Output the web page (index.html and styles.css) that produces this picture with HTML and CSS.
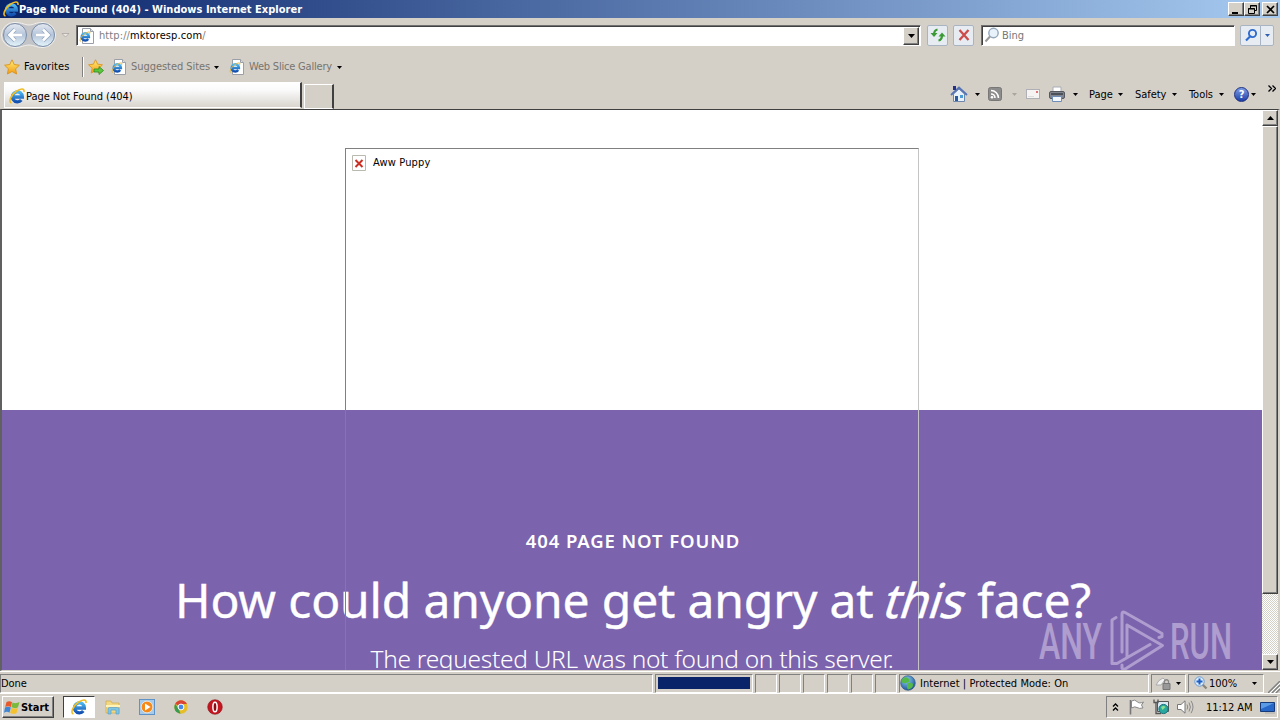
FILE: index.html
```
<!DOCTYPE html>
<html lang="en">
<head>
  <meta charset="UTF-8">
  <title>Page Not Found (404) - Windows Internet Explorer</title>
  <link rel="stylesheet" href="styles.css">
</head>
<body>
  <!-- shared icons -->
  <svg class="defs" width="0" height="0">
    <defs>
      <linearGradient id="blue" x1="0" y1="0" x2="0" y2="1">
        <stop offset="0" stop-color="#4db8f0"/><stop offset="1" stop-color="#1450b0"/>
      </linearGradient>
      <linearGradient id="round" x1="0" y1="0" x2="0" y2="1">
        <stop offset="0" stop-color="#e4e9f1"/><stop offset=".5" stop-color="#b5c5da"/><stop offset="1" stop-color="#e6f6fc"/>
      </linearGradient>
      <linearGradient id="gold" x1="0" y1="0" x2="0" y2="1">
        <stop offset="0" stop-color="#fff07a"/><stop offset="1" stop-color="#f39a14"/>
      </linearGradient>
      <radialGradient id="globe" cx=".4" cy=".3" r=".8">
        <stop offset="0" stop-color="#8fd0f5"/><stop offset="1" stop-color="#10458e"/>
      </radialGradient>
      <symbol id="ie" viewBox="0 0 16 16">
        <path d="M4 9H13.4A5 5 0 1 0 12.3 12" fill="none" stroke="url(#blue)" stroke-width="3.300"/>
        <path d="M2.500 15C-1 14 2 7 7 3.500S15.500 0 15 4" fill="none" stroke="#f0bc25" stroke-width="1.600"/>
      </symbol>
      <symbol id="iepage" viewBox="0 0 16 16">
        <path d="M3.500.5H11.500L14.500 3.500V15.500H3.500Z" fill="#fff" stroke="#9ba0a8"/>
        <path d="M11.500.5V3.500H14.500" fill="#ddd" stroke="#9ba0a8"/>
        <path d="M3 9H9.900A3.600 3.600 0 1 0 9.200 11" fill="none" stroke="url(#blue)" stroke-width="2.500"/>
        <path d="M1.500 13.500C0 12 3 7 7 5S11.500 4 10.500 6" fill="none" stroke="#e4b53c"/>
      </symbol>
      <symbol id="star" viewBox="0 0 16 16">
        <path d="M8 .8L10.200 5.500 15.400 6.200 11.600 9.800 12.600 15 8 12.500 3.400 15 4.400 9.800.6 6.200 5.800 5.500Z" fill="url(#gold)" stroke="#d9921a" stroke-width=".9"/>
      </symbol>
      <symbol id="down" viewBox="0 0 5 3"><path d="M0 0H5L2.500 3Z" fill="currentColor"/></symbol>
    </defs>
  </svg>

  <div class="titlebar">
    <svg class="i16"><use href="#ie"/></svg>
    <span class="title">Page Not Found (404) - Windows Internet Explorer</span>
    <div class="winbtns">
      <span class="winbtn"><svg width="11" height="9"><path d="M1 7H7V9H1Z"/></svg></span>
      <span class="winbtn"><svg width="11" height="9" fill="none" stroke="#000"><path d="M3.500 3V.500H9.500V5.500H8M3 1H10M1.500 3.500H7.500V8.500H1.500ZM1 4H8"/></svg></span>
      <span class="winbtn close"><svg width="11" height="9"><path d="M2 1L9 8M9 1L2 8" stroke="#000" stroke-width="1.700"/></svg></span>
    </div>
  </div>

  <div class="navbar">
    <svg class="backfwd" width="72" height="28" viewBox="0 0 72 28">
      <path d="M14 1.500C23 1.500 24 4 29 4S35 1.500 43 1.500A12.500 12.500 0 0 1 43 26.500C36 26.500 34 24 29 24S22 26.500 14 26.500A12.500 12.500 0 0 1 14 1.500Z" fill="#c3c4c8" stroke="#f2f1ee"/>
      <circle cx="15" cy="14" r="11.500" fill="url(#round)" stroke="#7b8ca6"/>
      <circle cx="43" cy="14" r="11.500" fill="url(#round)" stroke="#7b8ca6"/>
      <path d="M22 14H10M15 8.500L9.500 14L15 19.500M36 14H48M43 8.500L48.500 14L43 19.500" fill="none" stroke="#8fa3c0" stroke-width="4.200"/>
      <path d="M22 14H10M15 8.500L9.500 14L15 19.500M36 14H48M43 8.500L48.500 14L43 19.500" fill="none" stroke="#fff" stroke-width="2.800"/>
      <path d="M62 12.500H69L65.500 16Z" fill="#e9e6e0" stroke="#aaa69e" stroke-width=".8"/>
    </svg>
    <div class="address">
      <svg class="i16"><use href="#iepage"/></svg>
      <span class="url">http://<b>mktoresp.com</b>/</span>
      <span class="combo"><svg width="7" height="4"><path d="M0 0H7L3.500 4Z"/></svg></span>
    </div>
    <span class="toolbtn refresh"><svg width="16" height="16"><path d="M7.500 2.500Q4 3 4 8M8.500 13.500Q12 13 12 8" fill="none" stroke="#3b9a35" stroke-width="2.200"/><path d="M.5 6H7.500L4 10ZM8.500 9.500L12 5.500 15.500 9.500Z" fill="#3b9a35"/></svg></span>
    <span class="toolbtn stop"><svg width="14" height="14"><path d="M2.500 2L11.500 12M11.500 2L2.500 12" stroke="#cc4b4b" stroke-width="2.300"/></svg></span>
    <div class="search">
      <svg width="16" height="16" fill="none"><circle cx="9.500" cy="6" r="4.700" fill="#e8f2fa" stroke="#94a7bb" stroke-width="1.400"/><path d="M6 9.500L1.500 14.500" stroke="#999" stroke-width="2"/></svg>
      <span>Bing</span>
    </div>
    <span class="toolbtn go"><svg width="14" height="14" fill="none"><circle cx="8.500" cy="5.500" r="3.600" stroke="#2e6bd0" stroke-width="1.900"/><path d="M6 8.500L2 12.500" stroke="#2e6bd0" stroke-width="2.200"/></svg></span>
    <span class="toolbtn godrop"><svg class="arr"><use href="#down"/></svg></span>
  </div>

  <div class="favbar">
    <svg class="i16"><use href="#star"/></svg>
    <span class="fav">Favorites</span>
    <i class="sep"></i>
    <svg class="i16 addfav" viewBox="0 0 16 16"><use href="#star" width="15" height="15"/><path d="M6 10H11V7.500L15.500 11.500 11 15.500V13H6Z" fill="#5cc63c" stroke="#2d8a22" stroke-width=".8"/></svg>
    <svg class="i16 page1"><use href="#iepage"/></svg>
    <span class="grey sugg">Suggested Sites</span>
    <svg class="arr"><use href="#down"/></svg>
    <svg class="i16 page2"><use href="#iepage"/></svg>
    <span class="grey slice">Web Slice Gallery</span>
    <svg class="arr"><use href="#down"/></svg>
  </div>

  <div class="tabbar">
    <div class="tab"><svg class="i16"><use href="#ie"/></svg><span>Page Not Found (404)</span></div>
    <div class="newtab"></div>
    <div class="commands">
      <svg class="home" width="18" height="18"><path d="M3.500 9V16.500H14.500V9L9 4Z" fill="#e9f2fb" stroke="#6f87aa"/><path d="M1 10L9 2.500 17 10" fill="none" stroke="#5573b5" stroke-width="1.800"/><path d="M3 1H6V5H3Z" fill="#26308a"/><path d="M5 11H8V16H5Z" fill="#2c5aa0"/><path d="M10 10H13V13H10Z" fill="#4c9bd5"/></svg>
      <svg class="arr a1"><use href="#down"/></svg>
      <svg class="rss" width="14" height="14"><rect x=".5" y=".5" width="13" height="13" rx="2" fill="#8c8c8c" stroke="#777"/><path d="M3 3.500A7.500 7.500 0 0 1 10.500 11M3 7A4 4 0 0 1 7 11" fill="none" stroke="#fff" stroke-width="1.600"/><circle cx="4" cy="10.300" r="1.300" fill="#fff"/></svg>
      <svg class="arr off a2"><use href="#down"/></svg>
      <svg class="mail" width="14" height="10"><rect x=".5" y=".5" width="13" height="9" fill="#f6f4f3" stroke="#aeb0b5"/><path d="M10 2H12V4H10Z" fill="#d77"/><path d="M2 7.500H8" stroke="#ddd"/></svg>
      <svg class="print" width="16" height="16"><path d="M4 1H12V7H4Z" fill="#fff" stroke="#a9adb5"/><rect x=".5" y="5.500" width="15" height="7" rx="1.500" fill="#80858e" stroke="#545961"/><path d="M2 8H14" stroke="#3c4148" stroke-width="1.500"/><path d="M3.500 10.500H12.500V15.500H3.500Z" fill="#f3f8ff" stroke="#6c8eb8"/></svg>
      <svg class="arr a3"><use href="#down"/></svg>
      <span class="cmd c1">Page</span><svg class="arr"><use href="#down"/></svg>
      <span class="cmd c2">Safety</span><svg class="arr"><use href="#down"/></svg>
      <span class="cmd c3">Tools</span><svg class="arr"><use href="#down"/></svg>
      <span class="help">?</span><svg class="arr a4"><use href="#down"/></svg>
      <svg class="more" width="8" height="7"><path d="M.500.500L3.500 3.500.500 6.500M4.500.500L7.500 3.500 4.500 6.500" fill="none" stroke="#000" stroke-width="1.300"/></svg>
    </div>
  </div>

  <div class="viewport">
    <div class="page">
      <div class="photo">
        <svg width="14" height="16"><path d="M.5.5H13.500V15.500H.5Z" fill="#fff" stroke="#b9b9b0"/><path d="M3.500 5L10.500 12M10.500 5L3.500 12" stroke="#c92f22" stroke-width="2"/></svg>
        <span>Aww Puppy</span>
      </div>
      <div class="hero">
        <h2>404 PAGE NOT FOUND</h2>
        <h1>How could anyone get angry at <em>this</em> face?</h1>
        <p>The requested URL was not found on this server.</p>
      </div>
      <svg class="watermark" width="194" height="62" viewBox="0 0 194 62">
        <text x="0" y="49" textLength="63" lengthAdjust="spacingAndGlyphs">ANY</text>
        <text x="131" y="49" textLength="62" lengthAdjust="spacingAndGlyphs">RUN</text>
        <path d="M77 7.500L73 10V53.500H78L111 34.500M83 42V4Q83 1 86 2.500L123 23.500V26.500L120 27.500M83 55V58Q84 60 87 58.500L123.500 35.500L88 15M88 15V47" fill="none" stroke-width="3" stroke-linejoin="round" stroke-linecap="round"/>
      </svg>
    </div>
    <div class="scrollbar">
      <span class="sbtn"><svg width="7" height="4"><path d="M3.500 0L7 4H0Z"/></svg></span>
      <span class="thumb"></span>
      <span class="sbtn end"><svg width="7" height="4"><path d="M0 0H7L3.500 4Z"/></svg></span>
    </div>
  </div>

  <div class="statusbar">
    <div class="pane done"><span>Done</span></div>
    <div class="pane progress"><i></i></div>
    <div class="pane small"></div>
    <div class="pane small"></div>
    <div class="pane small"></div>
    <div class="pane small"></div>
    <div class="pane small"></div>
    <div class="pane small"></div>
    <div class="pane zone">
      <svg width="16" height="16"><circle cx="8" cy="8" r="7.300" fill="url(#globe)" stroke="#345c86" stroke-width=".7"/><path d="M3 3Q7 1 9 4T6 8Q2 9 1.500 6ZM8 8Q13 7 13 10T8 14.500Q6 12 8 8Z" fill="#54b948"/></svg>
      <span>Internet | Protected Mode: On</span>
    </div>
    <div class="pane lock">
      <svg width="17" height="16"><path d="M1 10Q3 5 8 3L10 5 6 10Z" fill="#f3f3f3" stroke="#aaa"/><path d="M8 8.500H15V14.500H8Z" fill="#999" stroke="#777"/><path d="M9.500 8V6Q11.500 3.500 13.500 6V8" fill="none" stroke="#888" stroke-width="1.300"/></svg>
      <svg class="arr"><use href="#down"/></svg>
    </div>
    <div class="pane zoom">
      <svg width="14" height="14"><path d="M8.500 8.500L12.500 12.500" stroke="#8b8579" stroke-width="2.300"/><circle cx="5.500" cy="5.500" r="4.700" fill="#dcebfa" stroke="#6c9bd2"/><path d="M5.500 2.500V8.500M2.500 5.500H8.500" stroke="#1d5fc4" stroke-width="2"/></svg>
      <span>100%</span>
      <svg class="arr"><use href="#down"/></svg>
    </div>
    <svg class="grip" width="12" height="12"><path d="M0 12L12 0M4 12L12 4M8 12L12 8" stroke="#808080" stroke-width="1.400"/><path d="M2 12L12 2M6 12L12 6" stroke="#fff"/></svg>
  </div>

  <div class="taskbar">
    <div class="start">
      <svg width="16" height="15"><path d="M2.500 2Q5 .3 8 2L7 7Q4 5.500 1.200 7Z" fill="#e8592b"/><path d="M8.500 2.500Q12 4 15.500 2L14 7.200Q11 9 7.500 7.300Z" fill="#79b93c"/><path d="M1 7.500Q4 6 6.800 7.500L5.500 12.700Q3 11 0 12.700Z" fill="#3f86d6"/><path d="M7.300 7.800Q10.500 9.500 13.800 7.700L12.500 13Q10 14.700 6.200 13Z" fill="#f5c22d"/></svg>
      <b>Start</b>
    </div>
    <div class="active"><svg class="i16"><use href="#ie"/></svg></div>
    <svg class="launch explorer" width="16" height="16"><path d="M1 2H6L7 4H14V14H1Z" fill="#f2d883" stroke="#cba94c" stroke-width=".7"/><path d="M1 6H15V8H1Z" fill="#fff3b8"/><path d="M3 15V10Q3 8.500 4.500 8.500H12.500Q14 8.500 14 10V15H11V11H6V15Z" fill="#7ec4e3" stroke="#5aa0c8" stroke-width=".7"/></svg>
    <svg class="launch wmp" width="16" height="16"><rect x=".5" y=".5" width="15" height="15" fill="#a8cbea" stroke="#5e93c7"/><circle cx="8" cy="8" r="5.800" fill="#f58a1b" stroke="#fff" stroke-width=".6"/><path d="M6 4.500L11.500 8 6 11.500Z" fill="#fff"/></svg>
    <svg class="launch chrome" width="14" height="14"><circle cx="7" cy="7" r="6.700" fill="#e7bd28"/><path d="M7 7L1.200 3.650A6.700 6.700 0 0 1 12.800 3.650L13 4H7Z" fill="#d94436"/><path d="M1.200 3.650L5 9.500 6.500 13.700A6.700 6.700 0 0 1 1.200 3.650Z" fill="#3d9b50"/><circle cx="7" cy="7" r="2.900" fill="#4688e8" stroke="#fff"/></svg>
    <svg class="launch opera" width="16" height="16"><circle cx="8" cy="8" r="7.300" fill="#c51620" stroke="#8b1017" stroke-width=".6"/><ellipse cx="8" cy="8" rx="2.100" ry="4.800" fill="#8a0d14" stroke="#fff" stroke-width="1.500"/></svg>
    <div class="tray">
      <svg class="chev" width="7" height="8"><path d="M1 3.500L3.500 1 6 3.500M1 7.500L3.500 5 6 7.500" fill="none" stroke="#000" stroke-width="1.300"/></svg>
      <svg class="flag" width="16" height="16"><path d="M1.500 1V15.500" stroke="#777" stroke-width="1.600"/><path d="M2.500 2Q6 0 8 2.500T14.500 3L12.500 6 14 9Q10 10 8 8.500T2.500 9Z" fill="#fff" stroke="#888"/></svg>
      <svg class="net" width="16" height="16"><path d="M4.500 2.500H15.500V12.500H4.500Z" fill="#d7eaf4" stroke="#555"/><path d="M1 .5V3.500H5V.5M3 3.500V14.500H8" fill="none" stroke="#555" stroke-width="1.300"/><circle cx="10.500" cy="10" r="4.600" fill="#29a8a0" stroke="#176e76"/><path d="M8 8Q10.500 6 12.500 8L9.500 11Z" fill="#8ee08b"/></svg>
      <svg class="sound" width="17" height="14"><path d="M.5 4.500H4L8 .800V13.200L4 9.500H.5Z" fill="#fff" stroke="#777"/><path d="M10 4.500Q11.500 7 10 9.500M12 2.500Q14.800 7 12 11.500M14 .800Q18 7 14 13.200" fill="none" stroke="#888"/></svg>
      <span class="clock">11:12 AM</span>
      <svg class="desk" width="16" height="13"><path d="M.500 1.500H14.500V10.500H.500Z" fill="#2767c7" stroke="#173a78"/><path d="M1 2H14L1 8Z" fill="#5b9be6"/><path d="M5 12H15" stroke="#aaa"/></svg>
    </div>
  </div>
</body>
</html>
```
FILE: styles.css
```
* {
  box-sizing: border-box;
}
body {
  margin: 0;
  width: 1280px;
  height: 720px;
  overflow: hidden;
  background: #d4d0c8;
  color: #000;
  font: 11px/14px "DejaVu Sans Condensed", "DejaVu Sans", sans-serif;
  font-stretch: condensed;
  letter-spacing: -0.05px;
  white-space: nowrap;
}
svg {
  display: block;
  flex: none;
}
.defs {
  position: absolute;
}
.i16 {
  width: 16px;
  height: 16px;
}
.arr {
  width: 5px;
  height: 3px;
}

/* title bar */
.titlebar {
  display: flex;
  align-items: center;
  height: 18px;
  padding-left: 3px;
  background: linear-gradient(to right, #0a246a, #a6caf0);
}
.title {
  color: #fff;
  font-weight: bold;
  letter-spacing: 0.02px;
}
.title, .search span, .tab span, .cmd, .pane span, .clock, .start b {
  padding-top: 2px;
}
.winbtns {
  display: flex;
  margin-left: auto;
  padding-right: 2px;
}
.winbtn {
  display: flex;
  align-items: center;
  justify-content: center;
  width: 16px;
  height: 14px;
}
.winbtn, .combo, .sbtn, .thumb, .start {
  background: #d4d0c8;
  border: 1px solid;
  border-color: #fff #404040 #404040 #fff;
  box-shadow: inset -1px -1px #808080;
}
.winbtn.close {
  margin-left: 2px;
}

/* address row */
.navbar {
  display: flex;
  align-items: center;
  height: 34px;
}
.address, .search {
  display: flex;
  align-items: center;
  height: 21px;
  background: #fff;
  border: 1px solid;
  border-color: #707070 #fff #fff #707070;
  box-shadow: inset 1px 1px #404040;
}
.address {
  width: 845px;
  margin-left: 4px;
  padding: 1px 1px 0 2px;
}
.url {
  margin-left: 4px;
  color: #808080;
  letter-spacing: 0.1px;
}
.url b {
  color: #000;
  font-weight: normal;
}
.combo {
  display: flex;
  align-items: center;
  justify-content: center;
  width: 16px;
  height: 18px;
  margin-left: auto;
}
.toolbtn {
  display: flex;
  align-items: center;
  justify-content: center;
  width: 21px;
  height: 21px;
  background: #e7ecf3;
  border: 1px solid #a9b4c2;
  border-radius: 2px;
}
.refresh {
  margin-left: 6px;
}
.stop {
  margin-left: 5px;
}
.search {
  width: 254px;
  margin-left: 7px;
  padding-left: 2px;
  color: #777;
}
.search span {
  margin-left: 2px;
}
.go {
  margin-left: 5px;
  border-radius: 2px 0 0 2px;
}
.godrop {
  width: 14px;
  margin-left: -1px;
  border-radius: 0 2px 2px 0;
  color: #2e5fb0;
}

/* favorites row */
.favbar {
  display: flex;
  align-items: center;
  height: 30px;
  padding-left: 4px;
}
.fav {
  width: 58px;
  margin-left: 4px;
  letter-spacing: 0.1px;
}
.sep {
  width: 2px;
  height: 20px;
  border-left: 1px solid #808080;
  border-right: 1px solid #fff;
}
.addfav {
  margin-left: 4px;
}
.page1 {
  margin-left: 7px;
}
.grey {
  margin-left: 4px;
  color: #77746f;
}
.sugg {
  width: 83px;
}
.page2 {
  margin-left: 10px;
}
.slice {
  width: 88px;
  letter-spacing: -0.2px;
}

/* tabs and command bar */
.tabbar {
  display: flex;
  align-items: flex-start;
  height: 27px;
  padding-left: 4px;
}
.tab {
  display: flex;
  align-items: center;
  width: 298px;
  height: 26px;
  padding: 1px 0 0 4px;
  background: linear-gradient(#fff, #fafafa 30%, #d9d5ce);
  border: 1px solid #fff;
  border-right: 2px solid #404040;
}
.tab span {
  margin-left: 1px;
}
.newtab {
  width: 30px;
  height: 25px;
  margin: 2px 0 0 2px;
  border: 1px solid #fff;
  border-right: 2px solid #404040;
}
.commands {
  display: flex;
  align-items: center;
  height: 24px;
  margin-left: 616px;
}
.a1 {
  margin-left: 7px;
}
.rss {
  margin-left: 8px;
}
.a2 {
  margin-left: 10px;
}
.off {
  color: #aaa59d;
}
.mail {
  margin-left: 9px;
}
.print {
  margin-left: 9px;
}
.a3 {
  margin-left: 8px;
}
.cmd {
  margin-left: 11px;
}
.c1 {
  width: 29px;
}
.c2 {
  width: 37px;
  margin-left: 12px;
}
.c3 {
  width: 30px;
  margin-left: 12px;
}
.help {
  width: 15px;
  height: 15px;
  margin-left: 10px;
  border: 1px solid #1c2f80;
  border-radius: 50%;
  background: linear-gradient(#7e9fe6, #1d3fa8);
  color: #fff;
  font-weight: bold;
  line-height: 13px;
  text-align: center;
}
.a4 {
  margin-left: 2px;
}
.more {
  margin: -12px 0 0 12px;
}

/* document area */
.viewport {
  display: flex;
  height: 562px;
  border: 1px solid;
  border-width: 1px 2px 1px 2px;
  border-color: #404040 #d4d0c8 #d4d0c8 #606060;
}
.page {
  position: relative;
  width: 1260px;
  height: 560px;
  padding-top: 300px;
  overflow: hidden;
  background: #fff;
}
.photo {
  position: absolute;
  top: 38px;
  left: 343px;
  display: flex;
  align-items: flex-start;
  width: 574px;
  height: 600px;
  padding: 6px;
  border: 1px solid;
  border-color: #808080 #c6c3c6 #c6c3c6 #808080;
}
.photo span {
  margin: 1px 0 0 7px;
  letter-spacing: 0.15px;
}
.hero {
  height: 260px;
  padding-top: 118px;
  background: #7b63ad;
  color: #fff;
  font-family: "Noto Sans", sans-serif;
  font-stretch: normal;
  text-align: center;
}
.hero h2 {
  margin: 0 0 0 2px;
  font-size: 18.5px;
  font-weight: 600;
  line-height: 26px;
  letter-spacing: 0.9px;
}
.hero h1 {
  margin: 14px 0 0 2px;
  font-size: 48px;
  font-weight: 400;
  line-height: 64px;
  letter-spacing: -0.15px;
  -webkit-text-stroke: 0.4px #fff;
}
/* slanted upright letters, slightly wider than the true italic */
.hero h1 em {
  display: inline-block;
  font-style: normal;
  transform: skewX(-18deg);
  letter-spacing: -0.8px;
}
.hero p {
  margin: 10px 0 0 0;
  font-size: 24.5px;
  font-weight: 300;
  line-height: 34px;
  letter-spacing: -0.3px;
}
.watermark {
  position: absolute;
  left: 1037px;
  top: 500px;
  overflow: visible;
  opacity: 0.5;
  font: 500 50px/1 Roboto, sans-serif;
  letter-spacing: 0;
}
.watermark text {
  fill: #e2d8ef;
}
.watermark path {
  stroke: #e2d8ef;
}
.scrollbar {
  display: flex;
  flex-direction: column;
  width: 16px;
  height: 560px;
  background: repeating-conic-gradient(#fff 0 25%, #d4d0c8 0 50%) 0 0 / 2px 2px;
}
.sbtn {
  display: flex;
  align-items: center;
  justify-content: center;
  height: 16px;
}
.thumb {
  height: 468px;
}
.sbtn.end {
  margin-top: auto;
}

/* status bar */
.statusbar {
  display: flex;
  align-items: center;
  height: 23px;
  padding-top: 1px;
  border-top: 1px solid #fff;
  border-bottom: 1px solid #fff;
}
.pane {
  display: flex;
  align-items: center;
  height: 19px;
  margin-right: 2px;
  border: 1px solid;
  border-color: #808080 #fff #fff #808080;
}
.done {
  width: 653px;
}
.progress {
  width: 98px;
  padding-left: 2px;
}
.progress i {
  width: 92px;
  height: 12px;
  background: #0a246a;
}
.small {
  width: 22px;
}
.zone {
  width: 250px;
}
.zone span {
  margin-left: 4px;
  letter-spacing: 0.05px;
}
.lock {
  width: 35px;
  padding-left: 3px;
}
.lock .arr {
  margin-left: 4px;
}
.zoom {
  width: 76px;
  padding-left: 5px;
}
.pane.zoom span {
  width: 43px;
  margin-left: 1px;
}
.grip {
  margin: 7px 0 0 2px;
}

/* taskbar */
.taskbar {
  display: flex;
  align-items: center;
  height: 26px;
  padding: 0 2px;
}
.start {
  display: flex;
  align-items: center;
  width: 52px;
  height: 22px;
  padding-left: 1px;
}
.start b {
  margin-left: 1px;
}
.active {
  display: flex;
  align-items: center;
  justify-content: center;
  width: 32px;
  height: 22px;
  margin-left: 9px;
  background: #fff;
  border: 1px solid;
  border-color: #404040 #fff #fff #404040;
}
.explorer {
  margin-left: 10px;
}
.wmp {
  margin-left: 18px;
}
.chrome {
  margin-left: 19px;
}
.opera {
  margin-left: 19px;
}
.tray {
  display: flex;
  align-items: center;
  width: 172px;
  height: 22px;
  margin-left: auto;
  padding-left: 5px;
  border: 1px solid;
  border-color: #808080 #fff #fff #808080;
}
.flag {
  margin-left: 10px;
}
.net {
  margin-left: 8px;
}
.sound {
  margin-left: 8px;
}
.clock {
  width: 47px;
  margin-left: 12px;
}
.desk {
  margin-left: 7px;
}
```
